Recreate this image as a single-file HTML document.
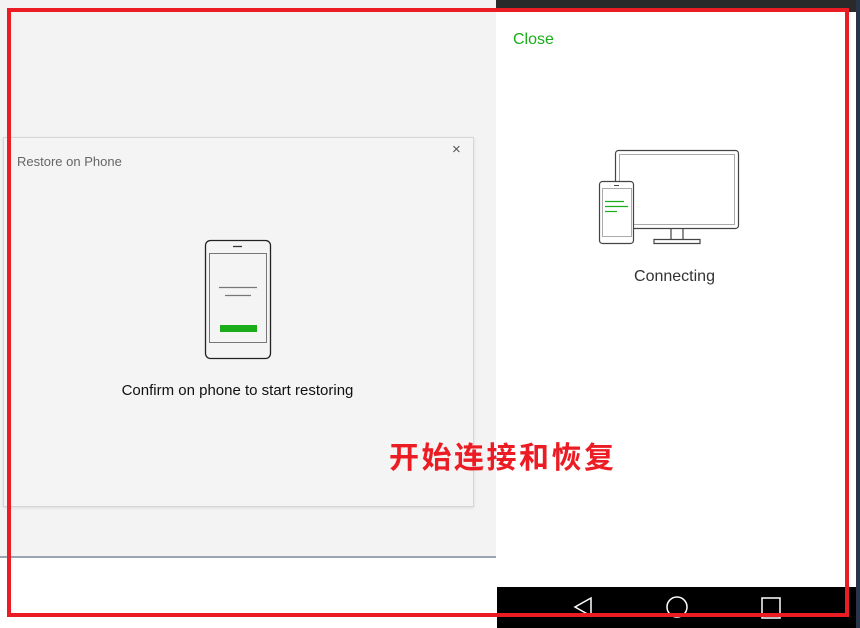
<!DOCTYPE html>
<html><head><meta charset="utf-8"><style>
body{margin:0;width:860px;height:628px;position:relative;overflow:hidden;background:#fff;font-family:"Liberation Sans","Noto Sans CJK SC",sans-serif}
.abs{position:absolute}
</style></head><body>
<div class="abs" style="left:0;top:0;width:496px;height:557px;background:#f3f3f3"></div>
<div class="abs" style="left:0;top:556px;width:496px;height:2px;background:#9aa4b4"></div>
<div class="abs" style="left:3px;top:137px;width:469px;height:368px;background:#f4f4f4;border:1px solid #d6d6d6;box-shadow:0 1px 3px rgba(0,0,0,.1)"></div>
<div class="abs" style="left:17px;top:154px;font-size:13px;color:#666">Restore on Phone</div>
<div class="abs" style="left:452px;top:141px;font-size:15px;color:#555">×</div>
<svg class="abs" style="left:200px;top:235px" width="80" height="130">
<rect x="5.5" y="5.5" width="65" height="118" rx="5" fill="none" stroke="#222" stroke-width="1.3"/>
<line x1="33" y1="11.5" x2="42" y2="11.5" stroke="#333" stroke-width="1.3"/>
<rect x="9.5" y="18.5" width="57" height="89" fill="none" stroke="#777"/>
<line x1="19" y1="52.5" x2="57" y2="52.5" stroke="#777" stroke-width="1.3"/>
<line x1="25" y1="60.5" x2="51" y2="60.5" stroke="#777" stroke-width="1.3"/>
<rect x="20" y="90" width="37" height="7" fill="#1aad19"/>
</svg>
<div class="abs" style="left:0;width:475px;top:382px;text-align:center;font-size:15px;color:#111">Confirm on phone to start restoring</div>
<div class="abs" style="left:496px;top:0;width:364px;height:12px;background:#2a2a2a"></div>
<div class="abs" style="left:856px;top:0;width:4px;height:628px;background:#2a3448"></div>
<div class="abs" style="left:497px;top:12px;width:359px;height:575px;background:#fff"></div>
<div class="abs" style="left:513px;top:31px;font-size:16px;color:#1aad19">Close</div>
<svg class="abs" style="left:580px;top:140px" width="180" height="120">
<rect x="35.5" y="10.5" width="123" height="78" rx="3" fill="#fff" stroke="#444" stroke-width="1.2"/>
<rect x="39.5" y="14.5" width="115" height="70" fill="none" stroke="#aaa"/>
<path d="M91 89 V99 M103 89 V99 M74 99.5 H120 V103.5 H74 Z" fill="none" stroke="#444" stroke-width="1.2"/>
<rect x="19.5" y="41.5" width="34" height="62" rx="3" fill="#fff" stroke="#444" stroke-width="1.2"/>
<line x1="34" y1="45.5" x2="39" y2="45.5" stroke="#444"/>
<rect x="22.5" y="48.5" width="29" height="48" fill="none" stroke="#aaa"/>
<line x1="25" y1="61.5" x2="44" y2="61.5" stroke="#1aad19" stroke-width="1.2"/>
<line x1="25" y1="66.5" x2="48" y2="66.5" stroke="#1aad19" stroke-width="1.2"/>
<line x1="25" y1="71.5" x2="37" y2="71.5" stroke="#1aad19" stroke-width="1.2"/>
</svg>
<div class="abs" style="left:497px;width:355px;top:268px;text-align:center;font-size:16px;color:#333">Connecting</div>
<div class="abs" style="left:497px;top:587px;width:359px;height:41px;background:#000"></div>
<svg class="abs" style="left:560px;top:594px" width="240" height="30">
<path d="M31 4 L15 13 L31 22 Z" fill="none" stroke="#fff" stroke-width="1.5"/>
<ellipse cx="117" cy="13" rx="10" ry="10" fill="none" stroke="#fff" stroke-width="1.5"/>
<rect x="202" y="4" width="18" height="20" fill="none" stroke="#fff" stroke-width="1.5"/>
</svg>
<div class="abs" style="left:7px;top:8px;width:834px;height:601px;border:4px solid #ec1c24"></div>
<div class="abs" style="left:389px;top:433px;font-size:30px;font-weight:bold;color:#ec1c24;letter-spacing:2.5px;font-family:'Noto Sans CJK SC',sans-serif">开始连接和恢复</div>
</body></html>
